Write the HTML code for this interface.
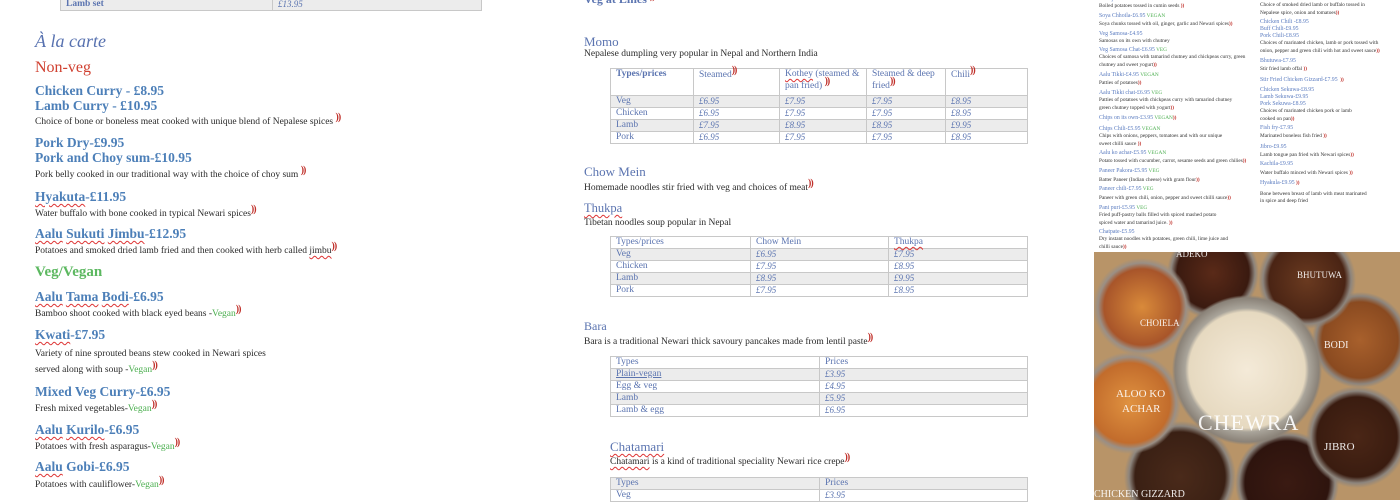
<!DOCTYPE html>
<html><head><meta charset="utf-8"><style>
*{margin:0;padding:0;box-sizing:border-box}
body{width:1400px;height:500px;overflow:hidden;background:#fff;position:relative;font-family:"Liberation Serif",serif;color:#333}
.a{position:absolute;white-space:nowrap;line-height:1}
.h{color:#4c7fb8;font-size:13.5px;font-weight:bold}
.d{font-size:9.5px;color:#2a2a2a}
.q{color:#c0302a;font-weight:bold;font-size:10px;position:relative;top:-4px;letter-spacing:-1px}
.g{color:#4caf50}
.u{text-decoration:underline wavy #d33;text-decoration-thickness:1px;text-underline-offset:2px}
table{position:absolute;border-collapse:collapse;font-family:"Liberation Serif",serif}
td{border:1.5px solid #c8c8c8;font-size:9.5px;color:#5b74b0;padding:0 5px;height:12px;line-height:11px;vertical-align:top}
tr.s td{background:#ececec}
td.p{font-style:italic;font-size:9px}
.r{position:absolute;font-size:5.3px;line-height:1;white-space:nowrap;color:#333}
.r b{color:#5b7cc0;font-weight:normal;font-size:5.8px}
.r i{color:#4caf50;font-style:normal}
.r em{color:#c0302a;font-style:normal;font-weight:bold}
.lab{position:absolute;color:#fff;font-family:"Liberation Serif",serif;line-height:1;white-space:nowrap;opacity:.9}
</style></head><body>

<table style="left:60px;top:-2px;width:422px"><tr class="s"><td style="width:212px;font-weight:bold">Lamb set</td><td class="p">£13.95</td></tr></table>
<div class="a" style="left:35px;top:32px;font-size:18px;font-style:italic;color:#5872b0">À la carte</div>
<div class="a" style="left:35px;top:60px;font-size:16px;color:#d04030">Non-veg</div>
<div class="a h" style="left:35px;top:84px">Chicken Curry - £8.95</div>
<div class="a h" style="left:35px;top:99px">Lamb Curry - £10.95</div>
<div class="a d" style="left:35px;top:117px">Choice of bone or boneless meat cooked with unique blend of Nepalese spices <span class="q">))</span></div>
<div class="a h" style="left:35px;top:136px">Pork Dry-£9.95</div>
<div class="a h" style="left:35px;top:151px">Pork and Choy sum-£10.95</div>
<div class="a d" style="left:35px;top:170px">Pork belly cooked in our traditional way with the choice of choy sum <span class="q">))</span></div>
<div class="a h" style="left:35px;top:190px"><span class="u">Hyakuta</span>-£11.95</div>
<div class="a d" style="left:35px;top:209px">Water buffalo with bone cooked in typical Newari spices<span class="q">))</span></div>
<div class="a h" style="left:35px;top:227px"><span class="u">Aalu</span> <span class="u">Sukuti</span> <span class="u">Jimbu</span>-£12.95</div>
<div class="a d" style="left:35px;top:246px">Potatoes and smoked dried lamb fried and then cooked with herb called <span class="u">jimbu</span><span class="q">))</span></div>
<div class="a" style="left:35px;top:265px;font-size:15px;color:#5cb860;font-weight:bold">Veg/Vegan</div>
<div class="a h" style="left:35px;top:290px"><span class="u">Aalu</span> <span class="u">Tama</span> <span class="u">Bodi</span>-£6.95</div>
<div class="a d" style="left:35px;top:309px">Bamboo shoot cooked with black eyed beans -<span class="g">Vegan</span><span class="q">))</span></div>
<div class="a h" style="left:35px;top:328px"><span class="u">Kwati</span>-£7.95</div>
<div class="a d" style="left:35px;top:350px">Variety of nine sprouted beans stew cooked in Newari spices</div>
<div class="a d" style="left:35px;top:365px">served along with soup -<span class="g">Vegan</span><span class="q">))</span></div>
<div class="a h" style="left:35px;top:385px">Mixed Veg Curry-£6.95</div>
<div class="a d" style="left:35px;top:404px">Fresh mixed vegetables-<span class="g">Vegan</span><span class="q">))</span></div>
<div class="a h" style="left:35px;top:423px"><span class="u">Aalu</span> <span class="u">Kurilo</span>-£6.95</div>
<div class="a d" style="left:35px;top:442px">Potatoes with fresh asparagus-<span class="g">Vegan</span><span class="q">))</span></div>
<div class="a h" style="left:35px;top:460px"><span class="u">Aalu</span> Gobi-£6.95</div>
<div class="a d" style="left:35px;top:480px">Potatoes with cauliflower-<span class="g">Vegan</span><span class="q">))</span></div>

<div class="a" style="left:584px;top:-7px;font-size:12px;color:#5b74b0;font-weight:bold">Veg at Lines <span class="q">))</span></div>
<div class="a" style="left:584px;top:35px;font-size:13px;color:#5b74b0">Momo</div>
<div class="a d" style="left:584px;top:50px">Nepalese dumpling very popular in Nepal and Northern India</div>
<table style="left:610px;top:68px;width:418px">
<tr><td style="width:83px;height:27px;font-weight:bold">Types/prices</td><td style="width:86px">Steamed<span class="q">))</span></td><td style="width:87px"><span class="u">Kothey</span> (steamed &amp; pan fried) <span class="q">))</span></td><td style="width:79px">Steamed &amp; deep fried<span class="q">))</span></td><td>Chili<span class="q">))</span></td></tr>
<tr class="s"><td>Veg</td><td class="p">£6.95</td><td class="p">£7.95</td><td class="p">£7.95</td><td class="p">£8.95</td></tr>
<tr><td>Chicken</td><td class="p">£6.95</td><td class="p">£7.95</td><td class="p">£7.95</td><td class="p">£8.95</td></tr>
<tr class="s"><td>Lamb</td><td class="p">£7.95</td><td class="p">£8.95</td><td class="p">£8.95</td><td class="p">£9.95</td></tr>
<tr><td>Pork</td><td class="p">£6.95</td><td class="p">£7.95</td><td class="p">£7.95</td><td class="p">£8.95</td></tr>
</table>
<div class="a" style="left:584px;top:165px;font-size:13px;color:#5b74b0">Chow Mein</div>
<div class="a d" style="left:584px;top:183px">Homemade noodles stir fried with veg and choices of meat<span class="q">))</span></div>
<div class="a" style="left:584px;top:202px;font-size:12.5px;color:#5b74b0"><span class="u">Thukpa</span></div>
<div class="a d" style="left:584px;top:219px">Tibetan noodles soup popular in Nepal</div>
<table style="left:610px;top:236px;width:418px">
<tr><td style="width:140px">Types/prices</td><td style="width:138px">Chow Mein</td><td><span class="u">Thukpa</span></td></tr>
<tr class="s"><td>Veg</td><td class="p">£6.95</td><td class="p">£7.95</td></tr>
<tr><td>Chicken</td><td class="p">£7.95</td><td class="p">£8.95</td></tr>
<tr class="s"><td>Lamb</td><td class="p">£8.95</td><td class="p">£9.95</td></tr>
<tr><td>Pork</td><td class="p">£7.95</td><td class="p">£8.95</td></tr>
</table>
<div class="a" style="left:584px;top:320px;font-size:12px;color:#5b74b0">Bara</div>
<div class="a d" style="left:584px;top:337px">Bara is a traditional Newari thick savoury pancakes made from lentil paste<span class="q">))</span></div>
<table style="left:610px;top:356px;width:418px">
<tr><td style="width:209px">Types</td><td>Prices</td></tr>
<tr class="s"><td><span style="text-decoration:underline">Plain-vegan</span></td><td class="p">£3.95</td></tr>
<tr><td>Egg &amp; veg</td><td class="p">£4.95</td></tr>
<tr class="s"><td>Lamb</td><td class="p">£5.95</td></tr>
<tr><td>Lamb &amp; egg</td><td class="p">£6.95</td></tr>
</table>
<div class="a" style="left:610px;top:440px;font-size:13px;color:#5b74b0"><span class="u">Chatamari</span></div>
<div class="a d" style="left:610px;top:457px"><span class="u">Chatamari</span> is a kind of traditional speciality Newari rice crepe<span class="q">))</span></div>
<table style="left:610px;top:477px;width:418px">
<tr class="s"><td style="width:209px">Types</td><td>Prices</td></tr>
<tr><td>Veg</td><td class="p">£3.95</td></tr>
</table>

<div class="r" style="left:1099px;top:-3px"><b>Aalu jeera-£4.95</b> <i>VEGAN</i></div>
<div class="r" style="left:1099px;top:4px">Boiled potatoes tossed in cumin seeds <em>))</em></div>
<div class="r" style="left:1099px;top:14px"><b>Soya Chhoila-£6.95</b> <i>VEGAN</i></div>
<div class="r" style="left:1099px;top:22px">Soya chunks tossed with oil, ginger, garlic and Newari spices<em>))</em></div>
<div class="r" style="left:1099px;top:32px"><b>Veg Samosa-£4.95</b></div>
<div class="r" style="left:1099px;top:39px">Samosas on its own with chutney</div>
<div class="r" style="left:1099px;top:48px"><b>Veg Samosa Chat-£6.95</b> <i>VEG</i></div>
<div class="r" style="left:1099px;top:55px">Choices of samosa with tamarind chutney and chickpeas curry, green</div>
<div class="r" style="left:1099px;top:63px">chutney and sweet yogurt<em>))</em></div>
<div class="r" style="left:1099px;top:73px"><b>Aalu Tikki-£4.95</b> <i>VEGAN</i></div>
<div class="r" style="left:1099px;top:81px">Patties of potatoes<em>))</em></div>
<div class="r" style="left:1099px;top:91px"><b>Aalu Tikki chat-£6.95</b> <i>VEG</i></div>
<div class="r" style="left:1099px;top:98px">Patties of potatoes with chickpeas curry with tamarind chutney</div>
<div class="r" style="left:1099px;top:106px">green chutney topped with yogurt<em>))</em></div>
<div class="r" style="left:1099px;top:116px"><b>Chips on its own-£3.95</b> <i>VEGAN</i><em>))</em></div>
<div class="r" style="left:1099px;top:127px"><b>Chips Chili-£5.95</b> <i>VEGAN</i></div>
<div class="r" style="left:1099px;top:134px">Chips with onions, peppers, tomatoes and with our unique</div>
<div class="r" style="left:1099px;top:142px">sweet chilli sauce <em>))</em></div>
<div class="r" style="left:1099px;top:151px"><b>Aalu ko achar-£5.95</b> <i>VEGAN</i></div>
<div class="r" style="left:1099px;top:159px">Potato tossed with cucumber, carrot, sesame seeds and green chilies<em>))</em></div>
<div class="r" style="left:1099px;top:169px"><b>Paneer Pakora-£5.95</b> <i>VEG</i></div>
<div class="r" style="left:1099px;top:178px">Batter Paneer (Indian cheese) with gram flour<em>))</em></div>
<div class="r" style="left:1099px;top:187px"><b>Paneer chili-£7.95</b> <i>VEG</i></div>
<div class="r" style="left:1099px;top:196px">Paneer with green chili, onion, pepper and sweet chilli sauce<em>))</em></div>
<div class="r" style="left:1099px;top:206px"><b>Pani puri-£5.95</b> <i>VEG</i></div>
<div class="r" style="left:1099px;top:213px">Fried puff-pastry balls filled with spiced mashed potato</div>
<div class="r" style="left:1099px;top:221px">spiced water and tamarind juice. <em>))</em></div>
<div class="r" style="left:1099px;top:230px"><b>Chatpate-£5.95</b></div>
<div class="r" style="left:1099px;top:237px">Dry instant noodles with potatoes, green chili, lime juice and</div>
<div class="r" style="left:1099px;top:245px">chilli sauce<em>))</em></div>

<div class="r" style="left:1260px;top:-3px"><b>Sukuti Sadeko-£7.95</b></div>
<div class="r" style="left:1260px;top:3px">Choice of smoked dried lamb or buffalo tossed in</div>
<div class="r" style="left:1260px;top:11px">Nepalese spice, onion and tomatoes<em>))</em></div>
<div class="r" style="left:1260px;top:20px"><b>Chicken Chili -£8.95</b></div>
<div class="r" style="left:1260px;top:27px"><b>Buff Chili-£9.95</b></div>
<div class="r" style="left:1260px;top:34px"><b>Pork Chili-£8.95</b></div>
<div class="r" style="left:1260px;top:41px">Choices of marinated chicken, lamb or pork tossed with</div>
<div class="r" style="left:1260px;top:49px">onion, pepper and green chili with hot and sweet sauce<em>))</em></div>
<div class="r" style="left:1260px;top:59px"><b>Bhutuwa-£7.95</b></div>
<div class="r" style="left:1260px;top:67px">Stir fried lamb offal <em>))</em></div>
<div class="r" style="left:1260px;top:78px"><b>Stir Fried Chicken Gizzard-£7.95</b> &nbsp;<em>))</em></div>
<div class="r" style="left:1260px;top:88px"><b>Chicken Sekuwa-£8.95</b></div>
<div class="r" style="left:1260px;top:95px"><b>Lamb Sekuwa-£9.95</b></div>
<div class="r" style="left:1260px;top:102px"><b>Pork Sekuwa-£8.95</b></div>
<div class="r" style="left:1260px;top:109px">Choices of marinated chicken pork or lamb</div>
<div class="r" style="left:1260px;top:117px">cooked on pan<em>))</em></div>
<div class="r" style="left:1260px;top:126px"><b>Fish fry-£7.95</b></div>
<div class="r" style="left:1260px;top:134px">Marinated boneless fish fried <em>))</em></div>
<div class="r" style="left:1260px;top:145px"><b>Jibro-£9.95</b></div>
<div class="r" style="left:1260px;top:153px">Lamb tongue pan fried with Newari spices<em>))</em></div>
<div class="r" style="left:1260px;top:162px"><b>Kachila-£9.95</b></div>
<div class="r" style="left:1260px;top:171px">Water buffalo minced with Newari spices <em>))</em></div>
<div class="r" style="left:1260px;top:181px"><b>Hyakula-£9.95</b> <em>))</em></div>
<div class="r" style="left:1260px;top:192px">Bone between breast of lamb with meat marinated</div>
<div class="r" style="left:1260px;top:199px">in spice and deep fried</div>

<div style="position:absolute;left:1094px;top:252px;width:306px;height:248px;overflow:hidden;background:#b89468">
<div style="position:absolute;inset:0;background:
radial-gradient(circle at 153px 118px,#f4ead8 0,#e6d9c0 58px,#a9a49a 62px,#8a8278 72px,transparent 75px),
radial-gradient(circle at 48px 55px,#d98a3a 0,#a8552a 38px,#9a8f85 44px,transparent 49px),
radial-gradient(circle at 119px 21px,#5a2a18 0,#3a1a10 36px,#8d857d 42px,transparent 46px),
radial-gradient(circle at 213px 28px,#6a3a20 0,#4a2414 38px,#8d857d 44px,transparent 49px),
radial-gradient(circle at 266px 88px,#a8602c 0,#8a4a20 38px,#8d857d 44px,transparent 48px),
radial-gradient(circle at 36px 151px,#e09240 0,#c26c2c 40px,#9a8f85 46px,transparent 51px),
radial-gradient(circle at 263px 185px,#4a2616 0,#3a1c10 40px,#8d857d 46px,transparent 51px),
radial-gradient(circle at 86px 225px,#4a2a1a 0,#3a2014 45px,#8d857d 51px,transparent 56px),
radial-gradient(circle at 193px 231px,#3a1a12 0,#2e140e 42px,#8d857d 48px,transparent 52px),
#b89468"></div>
<div class="lab" style="left:82px;top:-2px;font-size:9px">ADEKO</div>
<div class="lab" style="left:203px;top:19px;font-size:9px">BHUTUWA</div>
<div class="lab" style="left:46px;top:67px;font-size:9px">CHOIELA</div>
<div class="lab" style="left:230px;top:89px;font-size:10px">BODI</div>
<div class="lab" style="left:22px;top:137px;font-size:11px">ALOO KO</div>
<div class="lab" style="left:28px;top:152px;font-size:11px">ACHAR</div>
<div class="lab" style="left:104px;top:160px;font-size:22px;letter-spacing:1px">CHEWRA</div>
<div class="lab" style="left:230px;top:190px;font-size:11px">JIBRO</div>
<div class="lab" style="left:0px;top:238px;font-size:10px">CHICKEN GIZZARD</div>
</div>
</body></html>
